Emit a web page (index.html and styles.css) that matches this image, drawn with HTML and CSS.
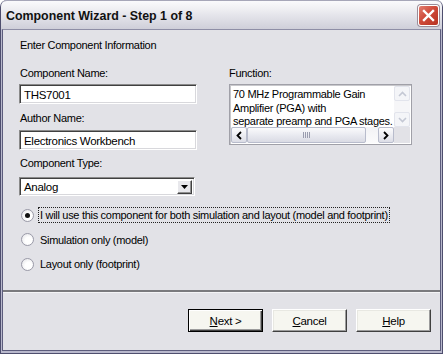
FILE: index.html
```html
<!DOCTYPE html>
<html lang="en">
<head>
  <meta charset="UTF-8" />
  <title>Component Wizard</title>
  <link rel="stylesheet" href="styles.css">
</head>
<body>
  <div class="window">
    <div class="titlebar">
      <span class="title">Component Wizard - Step 1 of 8</span>
      <span class="close">
        <svg width="13" height="13" viewBox="0 0 13 13">
          <path d="M2 2 L11 11 M11 2 L2 11" stroke="#fff" stroke-width="2.4" stroke-linecap="square" fill="none"/>
        </svg>
      </span>
    </div>

    <div class="client">
      <div class="form">
        <p class="heading">Enter Component Information</p>

        <div class="cols">
          <div class="col-left">
            <div class="label">Component Name:</div>
            <div class="edit">THS7001</div>
            <div class="label second">Author Name:</div>
            <div class="edit">Electronics Workbench</div>
            <div class="label third">Component Type:</div>
            <div class="combo">
              <span class="combo-text">Analog</span>
              <span class="drop">
                <svg width="7" height="4" viewBox="0 0 7 4"><path d="M0 0 H7 L3.5 4 Z" fill="#000"/></svg>
              </span>
            </div>
          </div>

          <div class="col-right">
            <div class="label">Function:</div>
            <div class="memo">
              <div class="memo-text">
                70 MHz Programmable Gain<br>
                Amplifier (PGA) with<br>
                separate preamp and PGA stages.
              </div>
              <div class="vscroll">
                <span class="sbtn disabled">
                  <svg width="9" height="6" viewBox="0 0 9 6"><path d="M1 5 L4.5 1.5 L8 5" stroke="#c4c8d4" stroke-width="1.6" fill="none"/></svg>
                </span>
                <span class="vtrack"></span>
                <span class="sbtn disabled">
                  <svg width="9" height="6" viewBox="0 0 9 6"><path d="M1 1 L4.5 4.5 L8 1" stroke="#c4c8d4" stroke-width="1.6" fill="none"/></svg>
                </span>
              </div>
              <div class="hscroll">
                <span class="sbtn">
                  <svg width="6" height="9" viewBox="0 0 6 9"><path d="M5 1 L1.5 4.5 L5 8" stroke="#000" stroke-width="1.8" fill="none"/></svg>
                </span>
                <span class="thumb"><span class="grip"></span></span>
                <span class="htrack"></span>
                <span class="sbtn">
                  <svg width="6" height="9" viewBox="0 0 6 9"><path d="M1 1 L4.5 4.5 L1 8" stroke="#000" stroke-width="1.8" fill="none"/></svg>
                </span>
              </div>
              <div class="corner"></div>
            </div>
          </div>
        </div>

        <div class="radios">
          <div class="radio-row">
            <span class="radio checked"></span>
            <span class="radio-label focused">I will use this component for both simulation and layout (model and footprint)</span>
          </div>
          <div class="radio-row">
            <span class="radio"></span>
            <span class="radio-label">Simulation only (model)</span>
          </div>
          <div class="radio-row">
            <span class="radio"></span>
            <span class="radio-label">Layout only (footprint)</span>
          </div>
        </div>
      </div>

      <div class="separator"></div>

      <div class="buttons">
        <button class="btn default"><u>N</u>ext &gt;</button>
        <button class="btn"><u>C</u>ancel</button>
        <button class="btn"><u>H</u>elp</button>
      </div>
    </div>
  </div>
</body>
</html>
```

FILE: styles.css
```css
body {
  margin: 0;
  background: #fff;
  font-family: 'Liberation Sans', Arial, sans-serif;
  font-size: 11px;
  color: #000;
}

.window {
  width: 443px;
  height: 354px;
  box-sizing: border-box;
  display: flex;
  flex-direction: column;
  background: #b8b8cc;
  border: 1px solid #4e4e6e;
  border-top: none;
  border-radius: 7px 7px 0 0;
  overflow: hidden;
}

/* title bar */
.titlebar {
  height: 29px;
  flex: none;
  display: flex;
  align-items: center;
  justify-content: space-between;
  padding: 0 4px 0 6px;
  margin: 0 -1px;
  background: linear-gradient(#fafafc 0%, #eeeef2 30%, #dcdce4 70%, #cfcfd9 100%);
  border-top: 1px solid #a6a6b8;
  border-radius: 7px 7px 0 0;
  box-sizing: border-box;
}

.title {
  font-weight: bold;
  font-size: 12.4px;
  color: #111;
  padding-top: 2px;
}

.close {
  width: 21px;
  height: 21px;
  box-sizing: border-box;
  display: flex;
  align-items: center;
  justify-content: center;
  border: 1px solid #fff;
  border-radius: 3px;
  background: linear-gradient(135deg, #e27e70 0%, #cf4a3a 45%, #b73222 100%);
  box-shadow: 0 0 0 1px #9a8c98;
  margin-top: 1px;
}

/* client area */
.client {
  flex: 1;
  display: flex;
  flex-direction: column;
  margin: 0 1px 2px;
  background: #e2e2e7;
  border: 1px solid #5c5c7c;
  border-top: 1px solid #8e8ea6;
}

.form {
  padding: 0 0 0 16px;
}

.heading {
  margin: 9px 0 0 1px;
  line-height: 13px;
  letter-spacing: -0.3px;
}

.label {
  line-height: 13px;
  margin-bottom: 4px;
  padding-left: 1px;
  letter-spacing: -0.3px;
}

.label.second {
  margin-top: 8px;
  margin-bottom: 5px;
}

.label.third {
  margin-top: 7px;
  margin-bottom: 7px;
}

.cols {
  display: flex;
  gap: 31px;
  margin-top: 15px;
}

.col-left {
  width: 178px;
}

.col-right {
  width: 184px;
}

.edit {
  height: 20px;
  box-sizing: border-box;
  background: #fff;
  border-top: 1px solid #8a8a8a;
  border-left: 1px solid #8a8a8a;
  border-right: 1px solid #fff;
  border-bottom: 1px solid #fff;
  box-shadow: inset 1px 1px 0 #404040, inset -1px -1px 0 #d8d8dc;
  padding: 3px 4px 0;
  line-height: 14px;
  font-size: 11.5px;
  letter-spacing: -0.3px;
}

.combo {
  height: 19px;
  width: 176px;
  box-sizing: border-box;
  display: flex;
  align-items: center;
  justify-content: space-between;
  background: #fff;
  border-top: 1px solid #8a8a8a;
  border-left: 1px solid #8a8a8a;
  border-right: 1px solid #fff;
  border-bottom: 1px solid #fff;
  box-shadow: inset 1px 1px 0 #404040, inset -1px -1px 0 #d8d8dc;
  padding: 0 2px 0 4px;
  font-size: 11.5px;
  letter-spacing: -0.3px;
}

.drop {
  width: 15px;
  height: 14px;
  box-sizing: border-box;
  display: flex;
  align-items: center;
  justify-content: center;
  background: #e8e8ec;
  border-top: 1px solid #fff;
  border-left: 1px solid #fff;
  border-right: 1px solid #404040;
  border-bottom: 1px solid #404040;
  box-shadow: inset -1px -1px 0 #909090;
}

/* function memo */
.memo {
  height: 61px;
  box-sizing: border-box;
  background: #fff;
  border: 1px solid #a0a0a8;
  box-shadow: inset 1px 1px 0 #c8c8cc;
  display: grid;
  grid-template-columns: 1fr 16px;
  grid-template-rows: 1fr 16px;
  padding: 1px;
  margin-left: 1px;
}

.memo-text {
  padding: 2px 0 0 2px;
  line-height: 13.5px;
  font-size: 11px;
  letter-spacing: -0.3px;
  white-space: nowrap;
  overflow: hidden;
}

.vscroll {
  display: flex;
  flex-direction: column;
  background: #f6f6f8;
}

.vtrack {
  flex: 1;
}

.hscroll {
  display: flex;
  background: linear-gradient(#f2f2f5, #fbfbfc);
}

.htrack {
  flex: 1;
}

.sbtn {
  width: 16px;
  height: 16px;
  box-sizing: border-box;
  display: flex;
  align-items: center;
  justify-content: center;
  border: 1px solid #b8bccc;
  border-radius: 2px;
  background: linear-gradient(#fdfdfe, #dcdde6);
}

.sbtn.disabled {
  height: 15px;
  border-color: #e2e4ec;
  background: #f4f5f8;
}

.thumb {
  width: 119px;
  box-sizing: border-box;
  display: flex;
  align-items: center;
  justify-content: center;
  border: 1px solid #b8bccc;
  border-radius: 2px;
  background: linear-gradient(#fafafc, #e6e7ee 60%, #dadbe4);
}

.grip {
  width: 7px;
  height: 6px;
  background: repeating-linear-gradient(90deg, #9a9cae 0 1px, transparent 1px 2px);
}

.corner {
  background: #e2e2e7;
}

/* radio group */
.radios {
  margin-top: 11px;
  display: flex;
  flex-direction: column;
  gap: 8.5px;
}

.radio-row {
  display: flex;
  align-items: center;
  height: 16px;
}

.radio {
  width: 13px;
  height: 13px;
  box-sizing: border-box;
  border-radius: 50%;
  border: 1px solid #9a9aa8;
  background: radial-gradient(circle at 60% 60%, #ffffff 35%, #e0e0e4 100%);
  margin: 0 4px 0 2px;
  display: flex;
  align-items: center;
  justify-content: center;
}

.radio.checked::after {
  content: "";
  width: 5px;
  height: 5px;
  border-radius: 50%;
  background: #111;
}

.radio-label {
  letter-spacing: -0.3px;
  font-size: 11px;
  line-height: 14px;
  padding: 0 1px;
  border: 1px solid transparent;
}

.radio-label.focused {
  border: 1px dotted #222;
}

.separator {
  margin-top: 18px;
  height: 2px;
  background: #7a7a7e;
  border-bottom: 1px solid #f4f4f6;
}

/* buttons */
.buttons {
  display: flex;
  justify-content: flex-end;
  gap: 9px;
  margin-top: 16px;
  padding-right: 9px;
}

.btn {
  width: 75px;
  height: 23px;
  box-sizing: border-box;
  font-family: 'Liberation Sans', Arial, sans-serif;
  font-size: 11.5px;
  letter-spacing: -0.3px;
  color: #000;
  background: #f6f6f0;
  border-top: 1px solid #fff;
  border-left: 1px solid #fff;
  border-right: 1px solid #404040;
  border-bottom: 1px solid #404040;
  box-shadow: inset -1px -1px 0 #9c9c9c, inset 1px 1px 0 #e8e8e2;
  padding: 0;
}

.btn.default {
  border: 1px solid #000;
  box-shadow: inset 1px 1px 0 #fff, inset -1px -1px 0 #404040, inset -2px -2px 0 #9c9c9c;
}
```
